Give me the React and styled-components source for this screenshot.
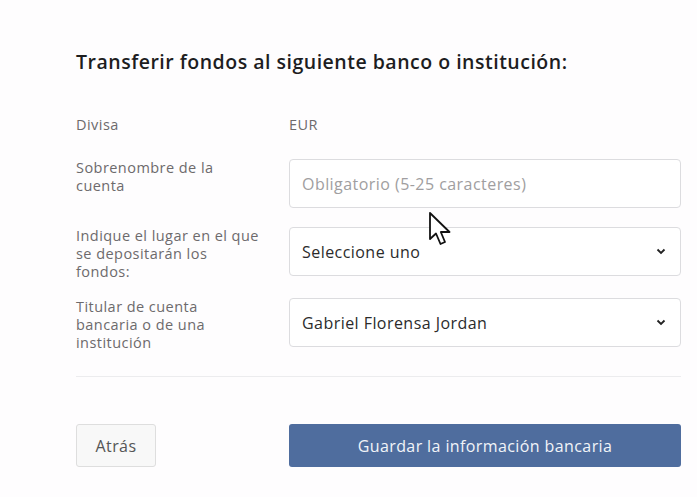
import React from 'react';
import styled, { createGlobalStyle } from 'styled-components';

const GlobalStyle = createGlobalStyle`
  html, body {
    margin: 0;
    padding: 0;
    background: #fefdfe;
  }
  body {
    font-family: "Open Sans", "Liberation Sans", sans-serif;
    color: #222;
  }
`;

const Page = styled.div`
  position: relative;
  width: 697px;
  height: 497px;
  padding: 49px 16px 0 76px;
  box-sizing: border-box;
`;

const Title = styled.h2`
  margin: 0 0 41px;
  font-size: 19.5px;
  line-height: 26px;
  font-weight: 600;
  letter-spacing: 0.5px;
  color: #1d1d1f;
`;

const Row = styled.div`
  display: grid;
  grid-template-columns: 213px 392px;
  align-items: start;
  margin-bottom: ${p => p.$gap}px;
`;

const Label = styled.div`
  font-size: 14.5px;
  line-height: 18px;
  letter-spacing: 0.45px;
  color: #6d6a6c;
  width: 187px;
`;

const Value = styled.div`
  font-size: 14.5px;
  line-height: 18px;
  letter-spacing: 0.45px;
  color: #6d6a6c;
`;

const Field = styled.div`
  height: 49px;
  box-sizing: border-box;
  border: 1px solid #dcdcdf;
  border-radius: 4px;
  background: #fff;
  display: flex;
  align-items: center;
  justify-content: space-between;
  padding: 0 14px 0 12px;
  font-size: 16px;
  letter-spacing: 0.45px;
  color: ${p => (p.$placeholder ? '#a09ea0' : '#2b2b2b')};
`;

const Chevron = () => (
  <svg width="10" height="7" viewBox="0 0 10 7">
    <path d="M1.5 1.5 L5 5 L8.5 1.5" fill="none" stroke="#222" strokeWidth="1.8" />
  </svg>
);

const Divider = styled.div`
  height: 1px;
  background: #ececee;
  width: 605px;
  margin: 24px 0 47px;
`;

const Buttons = styled.div`
  display: grid;
  grid-template-columns: 213px 392px;
  align-items: center;
`;

const BackButton = styled.button`
  width: 80px;
  height: 43px;
  border: 1px solid #dedede;
  border-radius: 3px;
  background: #f8f8f8;
  font-family: inherit;
  font-size: 16px;
  letter-spacing: 0.4px;
  color: #555;
`;

const SaveButton = styled.button`
  height: 43px;
  border: none;
  border-radius: 3px;
  background: #4f6d9e;
  color: #f2f4f8;
  font-family: inherit;
  font-size: 16px;
  letter-spacing: 0.4px;
`;

const Cursor = styled.svg`
  position: absolute;
  left: 428px;
  top: 211px;
`;

export default function App() {
  return (
    <>
      <GlobalStyle />
      <Page>
        <Title>Transferir fondos al siguiente banco o institución:</Title>
        <Row $gap={25}>
          <Label>Divisa</Label>
          <Value>EUR</Value>
        </Row>
        <Row $gap={19}>
          <Label>Sobrenombre de la cuenta</Label>
          <Field $placeholder>Obligatorio (5-25 caracteres)</Field>
        </Row>
        <Row $gap={17}>
          <Label>Indique el lugar en el que se depositarán los fondos:</Label>
          <Field>
            <span>Seleccione uno</span>
            <Chevron />
          </Field>
        </Row>
        <Row $gap={0}>
          <Label>Titular de cuenta bancaria o de una institución</Label>
          <Field>
            <span>Gabriel Florensa Jordan</span>
            <Chevron />
          </Field>
        </Row>
        <Divider />
        <Buttons>
          <BackButton>Atrás</BackButton>
          <SaveButton>Guardar la información bancaria</SaveButton>
        </Buttons>
        <Cursor width="28" height="40" viewBox="0 0 28 40">
          <path
            d="M2 2 L2 28 L8 22.5 L12.5 33 L17 31 L12.8 21 L21.5 21 Z"
            fill="#fff"
            stroke="#111"
            strokeWidth="1.8"
            strokeLinejoin="round"
          />
        </Cursor>
      </Page>
    </>
  );
}
